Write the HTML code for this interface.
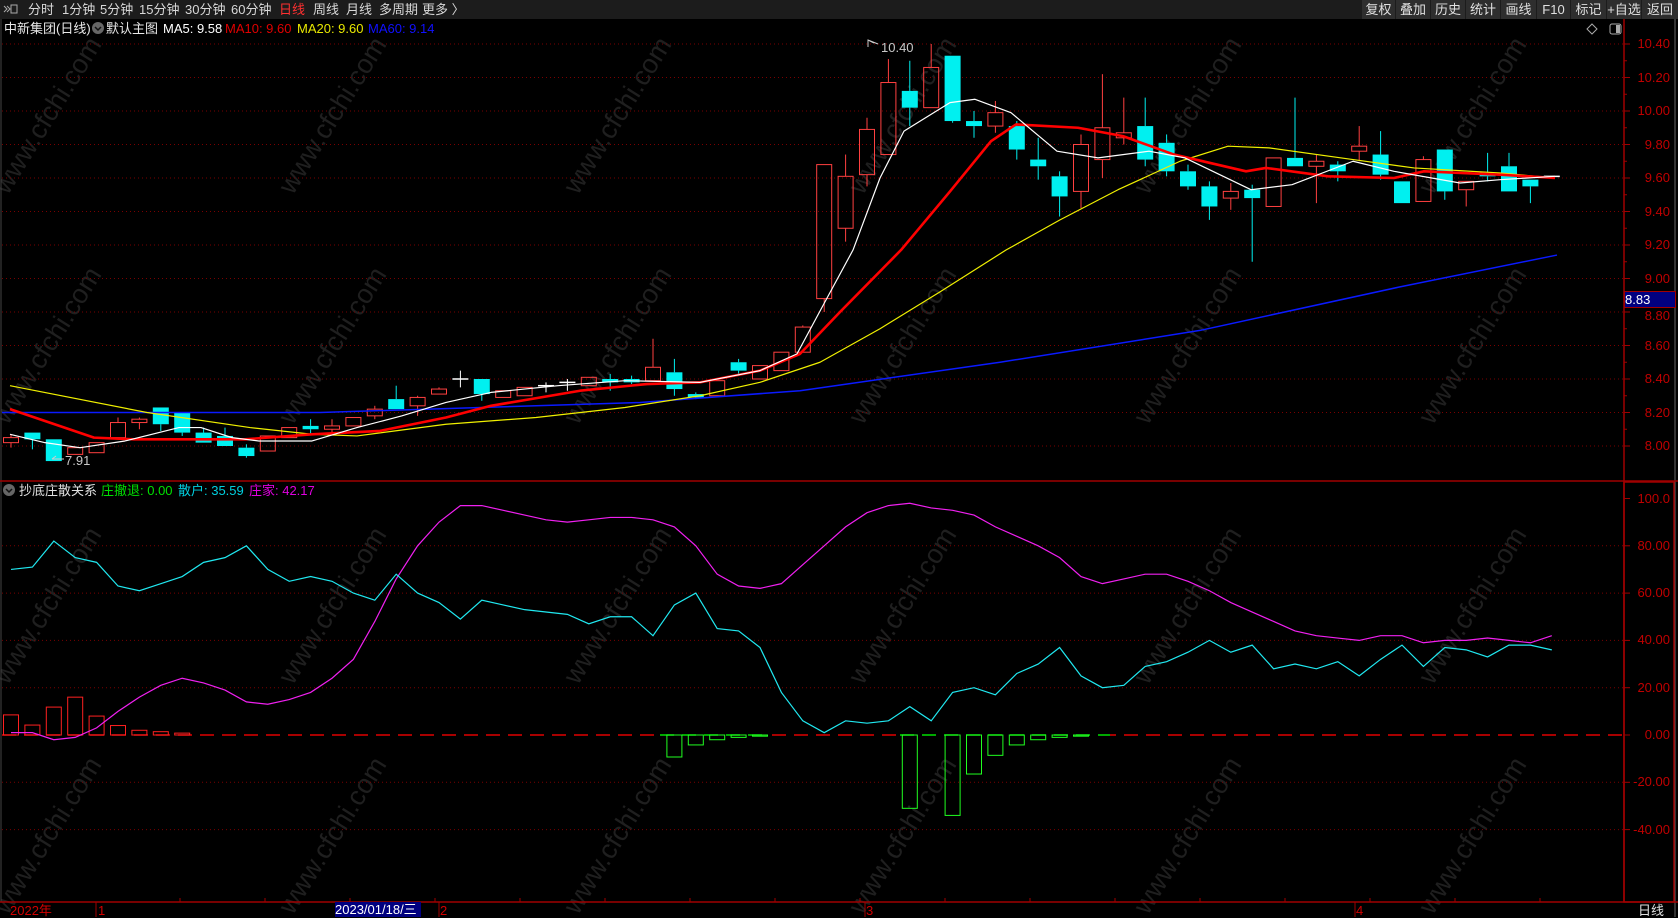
<!DOCTYPE html>
<html><head><meta charset="utf-8"><style>
html,body{margin:0;padding:0;background:#000;width:1678px;height:917px;overflow:hidden;font-family:"Liberation Sans","Noto Sans CJK SC",sans-serif;}
#top{position:absolute;left:0;top:0;width:1678px;height:19px;background:#1c1c1c;}
.t{position:absolute;top:1px;font-size:13px;color:#d8d8d8;white-space:nowrap;line-height:17px;}
.b{position:absolute;top:0;height:19px;background:#2e2e2e;color:#e0e0e0;font-size:13px;line-height:19px;text-align:center;}
.i{position:absolute;font-size:13px;white-space:nowrap;line-height:15px;}
.ax{position:absolute;font-size:13px;color:#c00000;width:60px;text-align:right;line-height:14px;}
svg{position:absolute;left:0;top:0;}
</style></head><body>
<svg id="s" width="1678" height="917" viewBox="0 0 1678 917"></svg>
<div id="top">
<svg width="16" height="19" style="left:2px;top:0"><path d="M2 6 L5 9 L2 12 M5 6 L8 9 L5 12" stroke="#aaa" fill="none"/><rect x="9" y="5" width="6" height="8" fill="none" stroke="#aaa"/></svg>
<span class="t" style="left:28px">分时</span><span class="t" style="left:62px">1分钟</span><span class="t" style="left:100px">5分钟</span><span class="t" style="left:139px">15分钟</span><span class="t" style="left:185px">30分钟</span><span class="t" style="left:231px">60分钟</span><span class="t" style="left:279px;color:#ff3030">日线</span><span class="t" style="left:313px">周线</span><span class="t" style="left:346px">月线</span><span class="t" style="left:379px">多周期</span><span class="t" style="left:422px">更多 〉</span>
<span class="b" style="left:1362px;width:33px">复权</span><span class="b" style="left:1396px;width:34px">叠加</span><span class="b" style="left:1431px;width:34px">历史</span><span class="b" style="left:1466px;width:34px">统计</span><span class="b" style="left:1501px;width:35px">画线</span><span class="b" style="left:1537px;width:33px">F10</span><span class="b" style="left:1571px;width:35px">标记</span><span class="b" style="left:1607px;width:34px">+自选</span><span class="b" style="left:1642px;width:36px">返回</span>
</div>
<span class="i" style="left:4px;top:21px;color:#e8e8e8">中新集团(日线)</span>
<span class="i" style="left:106px;top:21px;color:#e8e8e8">默认主图</span>
<span class="i" style="left:163px;top:21px;color:#fff">MA5: 9.58</span>
<span class="i" style="left:225px;top:21px;color:#e00000">MA10: 9.60</span>
<span class="i" style="left:297px;top:21px;color:#e8e800">MA20: 9.60</span>
<span class="i" style="left:368px;top:21px;color:#1010ff">MA60: 9.14</span>
<span class="i" style="left:19px;top:483px;color:#e0e0e0">抄底庄散关系</span>
<span class="i" style="left:101px;top:483px;color:#00e000">庄撤退: 0.00</span>
<span class="i" style="left:178px;top:483px;color:#00d0e0">散户: 35.59</span>
<span class="i" style="left:249px;top:483px;color:#e000e0">庄家: 42.17</span>
<span class="i" style="left:65px;top:453px;color:#c8c8c8">7.91</span>
<span class="i" style="left:881px;top:40px;color:#c8c8c8">10.40</span>
<div id="axes"></div>
<span class="i" style="left:1625px;top:292px;width:50px;height:15px;background:#000080;color:#fff;outline:1px solid #a00000">8.83</span>
<span class="i" style="left:10px;top:903px;color:#d00000">2022年</span>
<span class="i" style="left:98px;top:903px;color:#d00000">1</span>
<span class="i" style="left:335px;top:902px;width:86px;height:15px;background:#000080;color:#fff">2023/01/18/三</span>
<span class="i" style="left:440px;top:903px;color:#d00000">2</span>
<span class="i" style="left:866px;top:903px;color:#d00000">3</span>
<span class="i" style="left:1356px;top:903px;color:#d00000">4</span>
<span class="i" style="left:1638px;top:903px;color:#e0e0e0">日线</span>
<script>
var S=document.getElementById('s'),h='';
function P(p){return 446-(p-8)*167.5}
function V(v){return 735-v*2.365}
function X(i){return 11+21.4*i}
var cx=[55,340,625,910,1195,1480],cy=[120,350,610,840];
cx.forEach(function(x){cy.forEach(function(y){h+='<text x="'+x+'" y="'+y+'" transform="rotate(-58 '+x+' '+y+')" text-anchor="middle" font-size="27" fill="#1f1f1f" font-family="Liberation Sans">www.cfchi.com</text>';});});
for(var p=8;p<=10.41;p+=0.2){h+='<line x1="2" x2="1624" y1="'+P(p)+'" y2="'+P(p)+'" stroke="#7a0000" stroke-dasharray="1 3"/>';}
[80,60,40,20,-20,-40].forEach(function(v){h+='<line x1="2" x2="1624" y1="'+V(v)+'" y2="'+V(v)+'" stroke="#7a0000" stroke-dasharray="1 3"/>';});
h+='<line x1="1" x2="1" y1="19" y2="902" stroke="#444"/>';
h+='<line x1="1624" x2="1624" y1="19" y2="902" stroke="#a00000" stroke-width="1.5"/>';
h+='<line x1="1675" x2="1675" y1="19" y2="917" stroke="#666"/>';
h+='<line x1="0" x2="1678" y1="481" y2="481" stroke="#a00000" stroke-width="1.5"/>';
h+='<rect x="1624" y="482" width="50" height="420" fill="none" stroke="#a00000" stroke-width="1.5"/>';
h+='<line x1="0" x2="1678" y1="902" y2="902" stroke="#a00000" stroke-width="1.5"/>';
[96,439,865,1355].forEach(function(x){h+='<line x1="'+x+'" x2="'+x+'" y1="902" y2="917" stroke="#a00000"/>';});
for(var x=180;x<1600;x+=85){h+='<line x1="'+x+'" x2="'+x+'" y1="898" y2="902" stroke="#a00000"/>';}
var ax='';
for(var p=8;p<=10.41;p+=0.1){var y=P(p);h+='<line x1="1624" x2="'+(Math.round(p*10)%2==0?1630:1627)+'" y1="'+y+'" y2="'+y+'" stroke="#a00000"/>';if(Math.round(p*10)%2==0&&Math.abs(p-8.8)>0.05)ax+='<span class="ax" style="left:1610px;top:'+(y-7)+'px">'+p.toFixed(2)+'</span>';}
ax+='<span class="ax" style="left:1610px;top:'+(P(8.8)-3)+'px">8.80</span>';
[100,80,60,40,20,0,-20,-40].forEach(function(v){var y=V(v);h+='<line x1="1624" x2="1630" y1="'+y+'" y2="'+y+'" stroke="#a00000"/>';ax+='<span class="ax" style="left:1610px;top:'+(y-7)+'px">'+(v==100?'100.0':v.toFixed(2))+'</span>';});
document.getElementById('axes').innerHTML=ax;
h+='<path d="M1592 24 l5 5 l-5 5 l-5 -5 z" fill="none" stroke="#aaa"/><rect x="1610" y="24" width="11" height="10" rx="2" fill="none" stroke="#aaa"/><rect x="1616" y="25" width="4" height="8" fill="#aaa"/>';
h+='<circle cx="98" cy="28" r="6" fill="#666"/><path d="M95 27 l3 3 l3 -3" stroke="#111" fill="none" stroke-width="1.5"/>';
h+='<circle cx="9" cy="490" r="6" fill="#666"/><path d="M6 489 l3 3 l3 -3" stroke="#111" fill="none" stroke-width="1.5"/>';
var C=[[8.02,8.05,8.07,7.99],[8.08,8.04,8.08,7.98],[8.04,7.91,8.04,7.91],[7.95,7.99,7.99,7.95],[7.96,8.02,8.02,7.96],[8.05,8.14,8.17,8.05],[8.14,8.16,8.17,8.10],[8.23,8.13,8.23,8.09],[8.20,8.08,8.20,8.06],[8.08,8.02,8.11,8.02],[8.06,8.00,8.11,8.00],[7.99,7.94,8.01,7.93],[7.97,8.06,8.06,7.97],[8.05,8.11,8.11,8.05],[8.12,8.10,8.16,8.07],[8.10,8.12,8.16,8.07],[8.12,8.17,8.17,8.12],[8.18,8.22,8.24,8.16],[8.28,8.22,8.36,8.22],[8.24,8.29,8.30,8.18],[8.31,8.34,8.35,8.31],[8.40,8.40,8.45,8.35],[8.40,8.31,8.40,8.27],[8.29,8.33,8.33,8.29],[8.30,8.35,8.35,8.30],[8.36,8.36,8.38,8.32],[8.38,8.38,8.40,8.33],[8.36,8.41,8.41,8.36],[8.40,8.38,8.43,8.33],[8.40,8.38,8.42,8.37],[8.39,8.47,8.64,8.39],[8.44,8.34,8.52,8.30],[8.31,8.29,8.32,8.28],[8.30,8.39,8.39,8.30],[8.50,8.45,8.52,8.42],[8.40,8.48,8.48,8.40],[8.45,8.56,8.56,8.45],[8.56,8.71,8.72,8.56],[8.88,9.68,9.68,8.80],[9.30,9.61,9.74,9.22],[9.62,9.89,9.96,9.55],[9.74,10.17,10.31,9.74],[10.12,10.02,10.30,9.91],[10.02,10.26,10.40,10.02],[10.33,9.94,10.33,9.93],[9.94,9.91,10.00,9.84],[9.91,9.99,10.06,9.87],[9.91,9.77,9.94,9.71],[9.71,9.67,9.84,9.59],[9.61,9.49,9.64,9.37],[9.52,9.80,9.86,9.42],[9.71,9.90,10.22,9.60],[9.84,9.87,10.08,9.80],[9.91,9.71,10.08,9.67],[9.81,9.64,9.86,9.61],[9.64,9.55,9.68,9.53],[9.55,9.43,9.58,9.35],[9.48,9.52,9.57,9.41],[9.53,9.48,9.56,9.10],[9.43,9.72,9.72,9.43],[9.72,9.67,10.08,9.67],[9.67,9.70,9.74,9.45],[9.68,9.64,9.70,9.58],[9.76,9.79,9.91,9.70],[9.74,9.62,9.88,9.59],[9.58,9.45,9.58,9.45],[9.46,9.71,9.73,9.46],[9.77,9.52,9.77,9.47],[9.53,9.58,9.58,9.43],[9.62,9.61,9.75,9.58],[9.67,9.52,9.75,9.52],[9.59,9.55,9.59,9.45],[9.61,9.61,9.61,9.61]];
C.forEach(function(c,i){var x=X(i),o=c[0],cl=c[1],hi=c[2],lo=c[3];
 var col=cl>o?'#ff4040':(cl<o?'#00f0f0':'#ffffff');
 var top=Math.max(o,cl),bot=Math.min(o,cl);
 h+='<line x1="'+x+'" x2="'+x+'" y1="'+P(hi)+'" y2="'+P(top)+'" stroke="'+col+'"/>';
 h+='<line x1="'+x+'" x2="'+x+'" y1="'+P(bot)+'" y2="'+P(lo)+'" stroke="'+col+'"/>';
 var bh=Math.max(P(bot)-P(top),1);
 if(cl>o)h+='<rect x="'+(x-7.5)+'" y="'+P(top)+'" width="15" height="'+bh+'" fill="none" stroke="'+col+'"/>';
 else if(cl<o)h+='<rect x="'+(x-8)+'" y="'+P(top)+'" width="16" height="'+bh+'" fill="'+col+'"/>';
 else h+='<line x1="'+(x-8)+'" x2="'+(x+8)+'" y1="'+P(top)+'" y2="'+P(top)+'" stroke="'+col+'" stroke-width="1.5"/>';
});
function line(pts,col,w){h+='<polyline points="'+pts.map(function(q){return q[0]+','+P(q[1])}).join(' ')+'" fill="none" stroke="'+col+'" stroke-width="'+w+'" stroke-linejoin="round"/>';}
line([[2,8.20],[320,8.20],[640,8.26],[800,8.33],[1000,8.50],[1200,8.69],[1400,8.95],[1557,9.14]],'#0a1aff',1.5);
line([[10,8.36],[147,8.20],[250,8.11],[312,8.07],[357,8.06],[446,8.13],[536,8.17],[625,8.23],[700,8.30],[760,8.38],[820,8.50],[880,8.70],[940,8.92],[1006,9.17],[1060,9.35],[1118,9.53],[1180,9.70],[1228,9.79],[1269,9.78],[1353,9.71],[1414,9.66],[1500,9.63],[1555,9.60]],'#f0f000',1.2);
line([[10,8.22],[94,8.05],[134,8.04],[245,8.04],[312,8.07],[380,8.09],[446,8.17],[491,8.24],[580,8.33],[647,8.37],[700,8.38],[760,8.45],[800,8.55],[840,8.80],[901,9.17],[950,9.52],[991,9.82],[1016,9.92],[1078,9.90],[1123,9.85],[1174,9.74],[1246,9.64],[1266,9.66],[1328,9.61],[1394,9.60],[1424,9.64],[1500,9.62],[1555,9.60]],'#ff0000',2.6);
line([[10,8.07],[45,8.02],[80,7.99],[125,8.03],[179,8.11],[201,8.11],[232,8.05],[259,8.03],[312,8.03],[357,8.11],[402,8.18],[446,8.26],[491,8.32],[558,8.36],[625,8.39],[700,8.38],[760,8.45],[797,8.55],[824,8.85],[853,9.17],[880,9.60],[904,9.88],[950,10.05],[975,10.07],[1011,9.99],[1057,9.76],[1098,9.72],[1149,9.76],[1185,9.72],[1251,9.53],[1292,9.56],[1353,9.70],[1394,9.64],[1460,9.57],[1500,9.59],[1555,9.61]],'#ffffff',1.2);
h+='<path d="M868 47 L868 40 L874 43 M868 40 L878 44" stroke="#ccc" fill="none"/>';
h+='<path d="M64 459 L52 459 M52 459 L56 456" stroke="#ccc" fill="none"/>';
h+='<line x1="2" x2="1624" y1="735" y2="735" stroke="#e00000" stroke-width="1.5" stroke-dasharray="14 8"/>';
h+='<line x1="660" x2="770" y1="735" y2="735" stroke="#000" stroke-width="2"/><line x1="660" x2="770" y1="735" y2="735" stroke="#00e000" stroke-width="1.5" stroke-dasharray="14 8"/>';
h+='<line x1="900" x2="1110" y1="735" y2="735" stroke="#000" stroke-width="2"/><line x1="900" x2="1110" y1="735" y2="735" stroke="#00e000" stroke-width="1.5" stroke-dasharray="14 8"/>';
var R=[8.5,4.2,11.8,16,8,4,2,1.4,0.8];
R.forEach(function(v,i){var x=X(i);h+='<rect x="'+(x-7.5)+'" y="'+V(v)+'" width="15" height="'+(735-V(v))+'" fill="none" stroke="#ff2020"/>';});
var G={31:-9.3,32:-4.2,33:-2,34:-1,35:-0.5,42:-31,44:-34,45:-16.5,46:-8.6,47:-4.2,48:-2,49:-1,50:-0.5};
for(var k in G){var x=X(+k),v=G[k];h+='<rect x="'+(x-7.5)+'" y="735" width="15" height="'+(V(v)-735)+'" fill="none" stroke="#20ff20"/>';}
var cy2=[70,71,82,75,73,63,61,64,67,73,75,80,70,65,67,65,60,57,68,60,56,49,57,55,53,52,51,47,50,50,42,55,60,45,44,37,18,6,1,6,5,6,12,6,18,20,17,26,30,37,25,20,21,29,31,35,40,35,38,28,30,28,31,25,32,38,29,37,36,33,38,38,36];
var mg=[1,1,-2,-1,3,10,16,21,24,22,19,14,13,15,18,24,32,48,66,80,90,97,97,95,93,91,90,91,92,92,91,88,80,68,63,62,64,72,80,88,94,97,98,96,95,93,88,84,80,75,67,64,66,68,68,65,61,56,52,48,44,42,41,40,42,42,39,40,40,41,40,39,42];
function il(a,col){h+='<polyline points="'+a.map(function(v,i){return X(i)+','+V(v)}).join(' ')+'" fill="none" stroke="'+col+'" stroke-width="1.2"/>';}
il(mg,'#f020f0');il(cy2,'#20e8f0');
S.innerHTML=h;
</script>
</body></html>
